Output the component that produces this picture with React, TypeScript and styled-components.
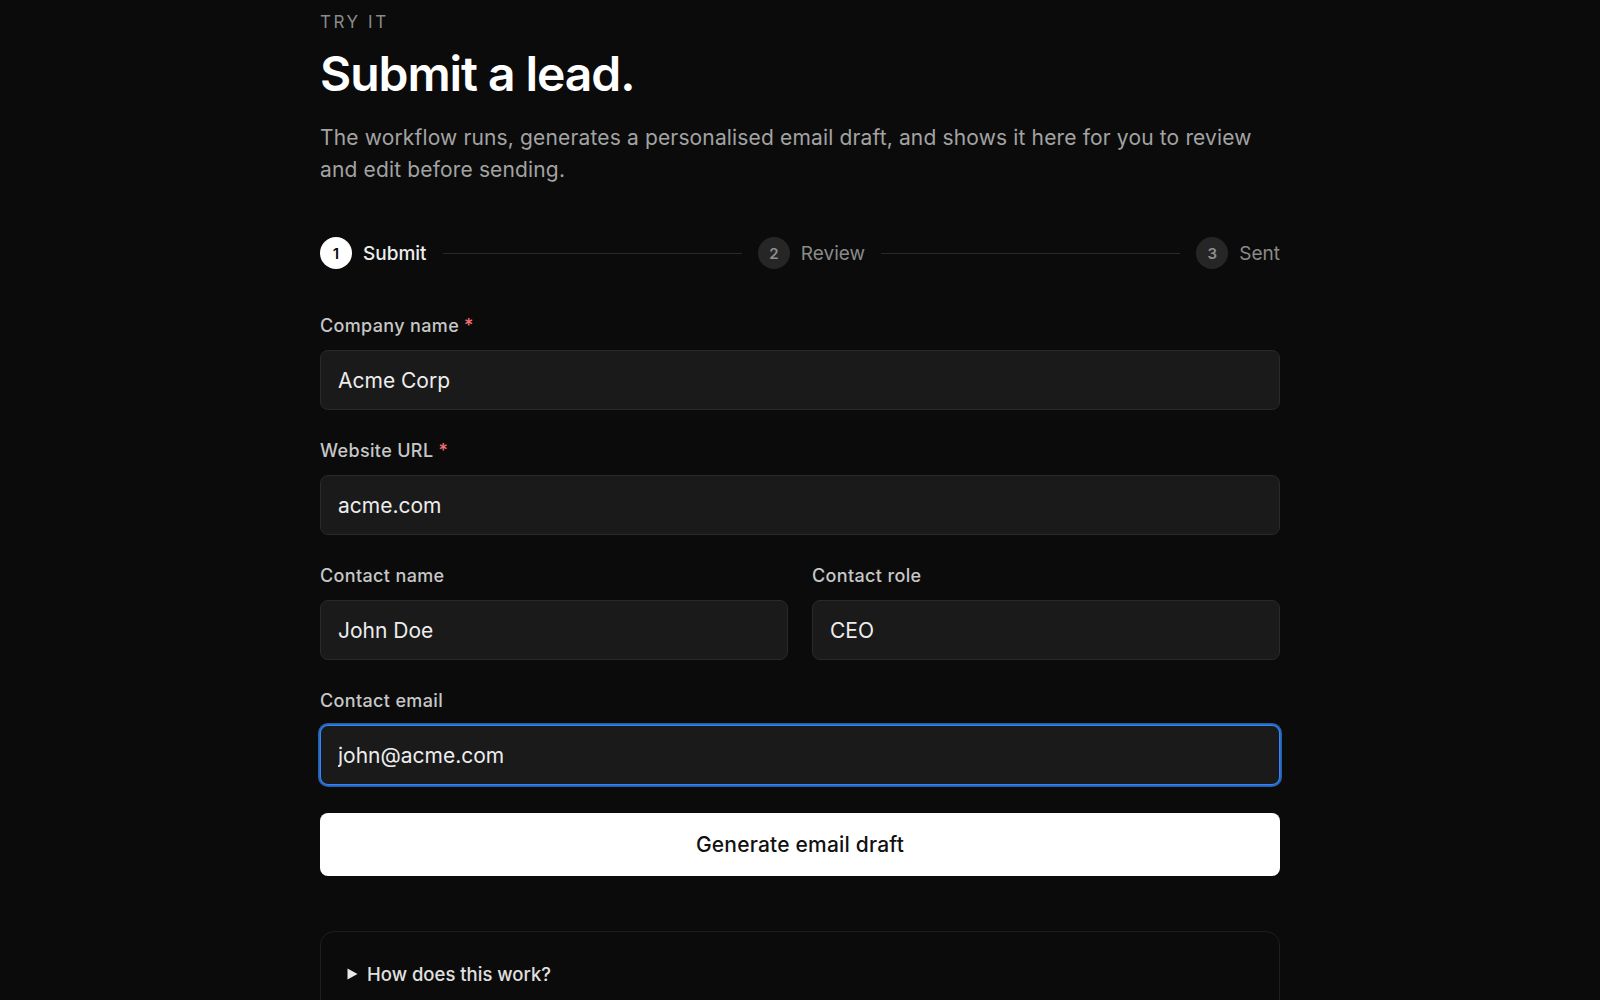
import React from "react";
import styled, { createGlobalStyle } from "styled-components";

const Global = createGlobalStyle`
  html, body {
    margin: 0;
    padding: 0;
    background: #0b0b0b;
  }
  body {
    font-family: Inter, "Noto Sans", Roboto, sans-serif;
    color: #ededed;
    -webkit-font-smoothing: antialiased;
  }
  * { box-sizing: border-box; }
`;

const Page = styled.main`
  width: 960px;
  margin: 0 auto;
  padding-top: 11px;
  padding-bottom: 40px;
`;

const Eyebrow = styled.div`
  font-size: 17px;
  line-height: 22px;
  letter-spacing: 0.15em;
  text-transform: uppercase;
  color: #8a8a8a;
  font-weight: 400;
`;

const Title = styled.h1`
  margin: 14px 0 0;
  font-size: 48px;
  line-height: 53px;
  font-weight: 600;
  letter-spacing: -0.022em;
  color: #ffffff;
`;

const Lead = styled.p`
  margin: 22px 0 0;
  font-size: 21px;
  line-height: 31.5px;
  letter-spacing: 0.15px;
  color: #a3a3a3;
`;

const Stepper = styled.ol`
  list-style: none;
  margin: 52px 0 0;
  padding: 0;
  display: flex;
  align-items: center;
  gap: 16px;
  height: 32px;
`;

const Step = styled.li`
  display: flex;
  align-items: center;
  gap: 11px;
  flex: none;
`;

const StepDot = styled.span<{ $active?: boolean }>`
  width: 32px;
  height: 32px;
  border-radius: 50%;
  display: flex;
  align-items: center;
  justify-content: center;
  font-size: 15px;
  font-weight: 600;
  background: ${(p) => (p.$active ? "#ffffff" : "#262626")};
  color: ${(p) => (p.$active ? "#0b0b0b" : "#8f8f8f")};
`;

const StepLabel = styled.span<{ $active?: boolean }>`
  font-size: 19px;
  font-weight: ${(p) => (p.$active ? 500 : 400)};
  color: ${(p) => (p.$active ? "#ededed" : "#8a8a8a")};
`;

const StepLine = styled.li`
  flex: 1;
  height: 1px;
  background: #2a2a2a;
`;

const Form = styled.form`
  margin-top: 44px;
  display: flex;
  flex-direction: column;
  gap: 28px;
`;

const Row = styled.div`
  display: grid;
  grid-template-columns: 1fr 1fr;
  gap: 24px;
`;

const Field = styled.label`
  display: flex;
  flex-direction: column;
  gap: 12px;
`;

const LabelText = styled.span`
  font-size: 18px;
  line-height: 25px;
  letter-spacing: 0.35px;
  font-weight: 500;
  color: #c7c7c7;
`;

const Required = styled.span`
  color: #f87171;
  margin-left: 5px;
`;

const Input = styled.input<{ $focused?: boolean }>`
  height: 60px;
  width: 100%;
  padding: 0 17px;
  border-radius: 8px;
  border: 1px solid ${(p) => (p.$focused ? "#3b82f6" : "#2a2a2a")};
  box-shadow: ${(p) => (p.$focused ? "0 0 0 1px #1d6fd8, 0 0 0 2px #2f5d9a" : "none")};
  background: #1a1a1a;
  color: #ededed;
  font-family: inherit;
  font-size: 21px;
  outline: none;
`;

const Submit = styled.button`
  height: 63px;
  width: 100%;
  border: none;
  border-radius: 8px;
  background: #ffffff;
  color: #111111;
  font-family: inherit;
  font-size: 21px;
  letter-spacing: 0.2px;
  font-weight: 500;
  cursor: pointer;
`;

const Details = styled.details`
  margin-top: 55px;
  border: 1px solid #1e1e1e;
  border-radius: 14px;
  padding: 29px 26px;
`;

const Summary = styled.summary`
  list-style: none;
  display: flex;
  align-items: center;
  gap: 9px;
  font-size: 18.5px;
  line-height: 26px;
  font-weight: 500;
  color: #e0e0e0;
  cursor: pointer;
  &::-webkit-details-marker { display: none; }
`;

const Caret = styled.svg`
  width: 11px;
  height: 12px;
  flex: none;
`;

export default function App() {
  return (
    <>
      <Global />
      <Page>
        <Eyebrow>Try it</Eyebrow>
        <Title>Submit a lead.</Title>
        <Lead>
          The workflow runs, generates a personalised email draft, and shows it here for you to review
          and edit before sending.
        </Lead>

        <Stepper>
          <Step>
            <StepDot $active>1</StepDot>
            <StepLabel $active>Submit</StepLabel>
          </Step>
          <StepLine />
          <Step>
            <StepDot>2</StepDot>
            <StepLabel>Review</StepLabel>
          </Step>
          <StepLine />
          <Step>
            <StepDot>3</StepDot>
            <StepLabel>Sent</StepLabel>
          </Step>
        </Stepper>

        <Form onSubmit={(e) => e.preventDefault()}>
          <Field>
            <LabelText>
              Company name<Required>*</Required>
            </LabelText>
            <Input defaultValue="Acme Corp" />
          </Field>
          <Field>
            <LabelText>
              Website URL<Required>*</Required>
            </LabelText>
            <Input defaultValue="acme.com" />
          </Field>
          <Row>
            <Field>
              <LabelText>Contact name</LabelText>
              <Input defaultValue="John Doe" />
            </Field>
            <Field>
              <LabelText>Contact role</LabelText>
              <Input defaultValue="CEO" />
            </Field>
          </Row>
          <Field>
            <LabelText>Contact email</LabelText>
            <Input $focused defaultValue="john@acme.com" />
          </Field>
          <Submit type="submit">Generate email draft</Submit>
        </Form>

        <Details>
          <Summary>
            <Caret viewBox="0 0 11 12">
              <path d="M0.5 0.5 L10.5 6 L0.5 11.5 Z" fill="#e8e8e8" />
            </Caret>
            How does this work?
          </Summary>
        </Details>
      </Page>
    </>
  );
}
